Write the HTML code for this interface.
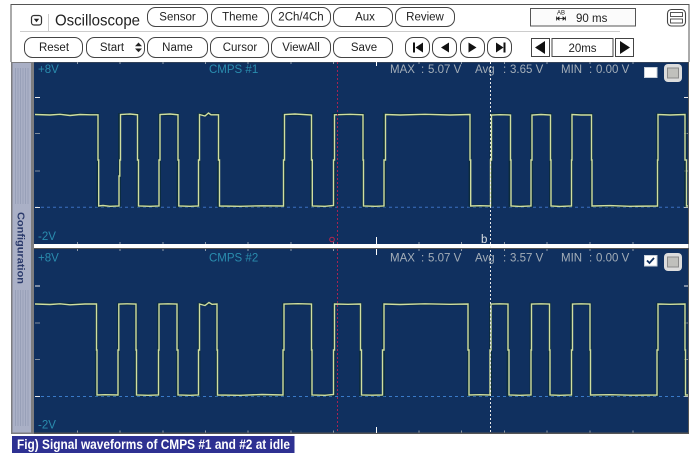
<!DOCTYPE html>
<html><head><meta charset="utf-8"><style>
html,body{margin:0;padding:0;background:#fff}
body{width:700px;height:457px;position:relative;overflow:hidden;font-family:"Liberation Sans",sans-serif}
svg{position:absolute;left:0;top:0}
text{font-family:"Liberation Sans",sans-serif}
.b rect{fill:#fff;stroke:#444;stroke-width:1}
.b text,.c{font-size:11.5px;fill:#222;text-anchor:middle}
.m{font-size:11.5px;fill:#a4aeb8}
.v{font-size:11.5px;fill:#2a8cae}
.t{fill:none;stroke:#d0dea0;stroke-width:1.4}
.h{fill:none;stroke:#0a2a20;stroke-width:2.8;opacity:.55}
</style></head><body>
<svg width="700" height="457" viewBox="0 0 700 457">
<!-- frame -->
<path d="M11 62V4.5H689V62" fill="none" stroke="#555" stroke-width="1"/>
<path d="M20 31.5H620" stroke="#ccc" stroke-width="1"/>
<path d="M48.5 14V31" stroke="#ccc" stroke-width="1"/>
<!-- dropdown icon -->
<rect x="31.5" y="15.5" width="10" height="9.5" rx="2.5" fill="#fff" stroke="#333" stroke-width="1.2"/>
<path d="M33.8 18.8H39.2L36.5 22.2Z" fill="#222"/>
<text x="55" y="25.5" font-size="16" fill="#222" textLength="85" lengthAdjust="spacingAndGlyphs">Oscilloscope</text>
<!-- row 1 -->
<g class="b">
<rect x="147.5" y="7.5" width="60" height="19" rx="8"/><text x="177.5" y="20.5">Sensor</text>
<rect x="211.5" y="7.5" width="57" height="19" rx="8"/><text x="240" y="20.5">Theme</text>
<rect x="271.5" y="7.5" width="59" height="19" rx="8"/><text x="301" y="20.5">2Ch/4Ch</text>
<rect x="333.5" y="7.5" width="59" height="19" rx="8"/><text x="365" y="20.5">Aux</text>
<rect x="395.5" y="7.5" width="59" height="19" rx="8"/><text x="425" y="20.5">Review</text>
</g>
<rect x="530.5" y="8.5" width="105" height="17.5" fill="#fbfbfb" stroke="#555"/>
<text x="557" y="14.5" font-size="6" fill="#222">AB</text>
<path d="M557 18.5H565M557 18.5l2-1.5v3zM565 18.5l-2-1.5v3zM556.5 16.5v4M565.5 16.5v4" stroke="#222" stroke-width=".8" fill="#222"/>
<text x="576" y="22" font-size="11.5" fill="#222">90 ms</text>
<rect x="667.5" y="9.5" width="18" height="16.5" rx="4" fill="#fff" stroke="#444" stroke-width="1.1"/>
<rect x="670.5" y="12.5" width="12" height="4" fill="#fff" stroke="#444" stroke-width=".9"/>
<rect x="670.5" y="19" width="12" height="4" fill="#fff" stroke="#444" stroke-width=".9"/>
<!-- row 2 -->
<g class="b">
<rect x="24.5" y="37.5" width="58" height="20" rx="8"/><text x="54" y="51">Reset</text>
<rect x="86.5" y="37.5" width="58" height="20" rx="8"/><text x="112" y="51">Start</text>
<rect x="147.5" y="37.5" width="60" height="20" rx="8"/><text x="177.5" y="51">Name</text>
<rect x="210.5" y="37.5" width="58" height="20" rx="8"/><text x="240" y="51">Cursor</text>
<rect x="271.5" y="37.5" width="59" height="20" rx="8"/><text x="301" y="51">ViewAll</text>
<rect x="333.5" y="37.5" width="59" height="20" rx="8"/><text x="364" y="51">Save</text>
<rect x="405.5" y="37.5" width="24" height="20" rx="8"/>
<rect x="432.5" y="37.5" width="24" height="20" rx="8"/>
<rect x="460.5" y="37.5" width="24" height="20" rx="8"/>
<rect x="487.5" y="37.5" width="24" height="20" rx="8"/>
</g>
<path d="M135 46.3L138.500 42.500L142 46.300ZM135 48.500L138.500 52.300L142 48.500Z" fill="#222"/>
<path d="M413 42.500H415V52.500H413ZM423 42.500V52.500L415.500 47.500Z" fill="#111"/>
<path d="M449 42.500V52.500L441 47.500Z" fill="#111"/>
<path d="M468.500 42.500V52.500L476.500 47.500Z" fill="#111"/>
<path d="M496 42.500V52.500L503.500 47.500ZM503.500 42.500H505.500V52.500H503.500Z" fill="#111"/>
<rect x="531.500" y="38.500" width="18" height="18" fill="#fff" stroke="#444"/>
<path d="M545 41V54L535 47.500Z" fill="#111"/>
<rect x="552" y="38.500" width="61" height="18" fill="#fff" stroke="#444"/>
<text class="c" x="582.500" y="52">20ms</text>
<rect x="615.500" y="38.500" width="18" height="18" fill="#fff" stroke="#444"/>
<path d="M620 41V54L630 47.500Z" fill="#111"/>

<!-- side bar -->
<rect x="11" y="62" width="23" height="372" fill="#7d7d80"/>
<rect x="12.500" y="63" width="18.500" height="369.500" fill="#aab0c6"/>
<path d="M15.500 68V204M18 68V204M20.500 68V204M23 68V204M25.500 68V204M28 68V204M15.500 290V426M18 290V426M20.500 290V426M23 290V426M25.500 290V426M28 290V426" stroke="#98a0b8" stroke-width="1"/>
<text transform="translate(17.500 212) rotate(90)" font-size="10.500" font-weight="bold" fill="#2b3a6b" textLength="72" lengthAdjust="spacingAndGlyphs">Configuration</text>

<!-- plot -->
<rect x="34" y="62" width="655" height="372" fill="#555"/>
<rect x="34" y="62.500" width="654" height="181.500" fill="#10305f"/>
<rect x="34" y="244" width="654.500" height="4" fill="#fff"/>
<rect x="34" y="249" width="654" height="183.500" fill="#10305f"/>

<!-- dashed zero lines -->
<path d="M35 207.200H688" stroke="#3a6fc0" stroke-width="1" stroke-dasharray="3 3"/>
<path d="M35 396.500H688" stroke="#3a7ac8" stroke-width="1" stroke-dasharray="3 3"/>

<!-- ticks -->
<path d="M77.500 62V64M120 62V64M163 62V64M205.500 62V64M248 62V64M291 62V64M333.500 62V64M419 62V64M461.500 62V64M504.500 62V64M547 62V64M590 62V64M633 62V64
M77.500 242V244M120 242V244M163 242V244M205.500 242V244M248 242V244M291 242V244M333.500 242V244M419 242V244M461.500 242V244M504.500 242V244M547 242V244M590 242V244M633 242V244
M77.500 249V251M120 249V251M163 249V251M205.500 249V251M248 249V251M291 249V251M333.500 249V251M419 249V251M461.500 249V251M504.500 249V251M547 249V251M590 249V251M633 249V251
M77.500 430.500V432.500M120 430.500V432.500M163 430.500V432.500M205.500 430.500V432.500M248 430.500V432.500M291 430.500V432.500M333.500 430.500V432.500M419 430.500V432.500M461.500 430.500V432.500M504.500 430.500V432.500M547 430.500V432.500M590 430.500V432.500M633 430.500V432.500" stroke="#8e9aa8" stroke-width="1"/>
<path d="M376.500 61V66M376.500 237V244M376.500 249V255M376.500 427V433" stroke="#fff" stroke-width="1"/>
<path d="M35 97.500H40M684 97.500H688M35 207.500H40M684 207.500H688M35 286H40M684 286H688M35 396.500H40M684 396.500H688" stroke="#e8e8e8" stroke-width="1"/>
<path d="M35 133.500H40M35 171H40M684 133.500H688M684 171H688M35 323H40M35 359.500H40M684 323H688M684 359.500H688" stroke="#7f8c9c" stroke-width="1"/>

<!-- waveforms -->
<g id="w1">
<path class="h" d="M35 114.500H98V206H119.500V114.500H138V206H159.500V114.500H178V206H199V114.500H218.500V206H284V114.500H311.500V206H334V114.500H363V206H384.500V114.500H470V206H491V114.500H510V206H531.500V114.500H550.500V206H571.500V114.500H591.500V206H657.500V114.500H685.500V206H688"/>
<path class="t" d="M35 114.500L50 115L60 114.300L70 115.500L80 114.500L90 114.800H98V160H98.700V206L103 205.500L110 206.300L119 206V176H119.800V160H120.500V114.500L130 114L137.500 114.800V160H138.500V206L150 206.300L159 206V160H160V114.500L170 114L178 114.800V160H178.800V206L190 206.300L198.500 206V160H199.500V114.500L203 115.500L205 116L208.500 113L211 114.800L218.500 114.800V160H219.500V206L240 206.300L262 205.800L283.500 206V160H284.500V114.500L295 114L311.500 115V160H312.300V206L325 206.300L333.500 205.500V160H334.500V114.800L350 114.300L363 114.800V160H363.500V206L375 206.300L384 206V160H385.500V114.500L400 115L425 114.300L450 115L470 114.500V160H470.700V206L480 205.700L490.500 206V160H491.500V115L500 114.700L510.500 115V160H511V206L520 206.400L531 206V160H532V115L541 114.500L550.500 115V160H551V206L560 206.400L571.500 206V160H572V114.500L581 115L591.500 115V160H592V206L610 205.600L630 206.300L657.500 206V160H658V114.500L670 115L685 114.500V160H686.500V206H688"/>
</g>
<g id="w2">
<path class="h" d="M35 304H96.500V395H118.500V304H136V395H158.500V304H177.500V395H199V304H217V395H283.500V304H311.500V395H334V304H360.500V395H383.500V304H468.500V395H490.500V304H508V395H531V304H549.500V395H571.500V304H590V395H657.500V304H685V395H688"/>
<path class="t" d="M35 304L50 304.500L60 303.800L70 304.800L85 304L96.500 304V350H97V395L105 394.700L118 395V350H118.800V304L127 303.800L136 304V350H136.500V395L148 395.300L158.500 395V350H159V304L168 303.800L177 304V350H178V395L190 395.300L198.500 395V350H199.500V304L203 305L205 305.500L209 302.500L212 304.300L217 304V350H217.500V395L240 395.300L262 394.500L283 395V350H284V304L298 303.700L311.500 304V350H312V395L325 395.300L333.500 394.500V350H334.500V304L348 304.300L360.500 304V350H361.500V395L372 395.200L382.500 395V350H384V304L400 304.500L425 303.800L450 304.300L468 304V350H469V395L480 394.700L490 395V350H491V304L500 303.800L508 304V350H509V395L520 395.300L531 395V350H531.500V304L541 303.800L549.500 304V350H550V395L560 395.300L571.500 395V350H572.500V304L581 303.800L590 304V350H590.500V395L610 394.700L630 395.200L657 395V350H658V304L670 304.300L685 304V350H685.500V395H688"/>
</g>

<!-- cursors -->
<path d="M337.500 62V244M337.500 249V433" stroke="#a52452" stroke-width="1" stroke-dasharray="2 2"/>
<path d="M490.500 62V433" stroke="#e8e8e8" stroke-width="1" stroke-dasharray="2 2"/>
<circle cx="332" cy="239.500" r="2.300" fill="none" stroke="#b8264e" stroke-width="1"/>
<text x="481" y="243" font-size="11.500" fill="#d8dde2">b</text>

<!-- labels panel 1 -->
<text class="v" x="38" y="73">+8V</text>
<text class="v" x="38" y="240">-2V</text>
<text class="v" x="209" y="73">CMPS #1</text>
<text class="m" x="390" y="73">MAX</text><text class="m" x="421" y="73">:</text><text class="m" x="428" y="73">5.07 V</text>
<text class="m" x="475" y="73">Avg</text><text class="m" x="503" y="73">:</text><text class="m" x="510" y="73">3.65 V</text>
<text class="m" x="561" y="73">MIN</text><text class="m" x="589" y="73">:</text><text class="m" x="596" y="73">0.00 V</text>
<rect x="644.500" y="67.500" width="12.500" height="10" fill="#fff" stroke="#c8d0da" stroke-width="1"/>
<rect x="664" y="64" width="18" height="18" rx="4" fill="#dcdcdc"/>
<rect x="667.500" y="68" width="11" height="10" fill="#c0c0bc" stroke="#8a8a8a" stroke-width="1"/>

<!-- labels panel 2 -->
<text class="v" x="38" y="261.500">+8V</text>
<text class="v" x="38" y="428.500">-2V</text>
<text class="v" x="209" y="261.500">CMPS #2</text>
<text class="m" x="390" y="261.500">MAX</text><text class="m" x="421" y="261.500">:</text><text class="m" x="428" y="261.500">5.07 V</text>
<text class="m" x="475" y="261.500">Avg</text><text class="m" x="503" y="261.500">:</text><text class="m" x="510" y="261.500">3.57 V</text>
<text class="m" x="561" y="261.500">MIN</text><text class="m" x="589" y="261.500">:</text><text class="m" x="596" y="261.500">0.00 V</text>
<rect x="644.500" y="255.500" width="12.500" height="10.500" fill="#fff" stroke="#c8d0da" stroke-width="1"/>
<path d="M647 260.500L649.500 263L654 258" fill="none" stroke="#10305f" stroke-width="1.800"/>
<rect x="664" y="253" width="18" height="18" rx="4" fill="#dcdcdc"/>
<rect x="667.500" y="257" width="11" height="10" fill="#c0c0bc" stroke="#8a8a8a" stroke-width="1"/>

<!-- caption -->
<rect x="12" y="436" width="282.500" height="17" fill="#2e3192"/>
<text x="17" y="449" font-size="13.500" font-weight="bold" fill="#fff" textLength="273" lengthAdjust="spacingAndGlyphs">Fig) Signal waveforms of CMPS #1 and #2 at idle</text>
</svg>
</body></html>
